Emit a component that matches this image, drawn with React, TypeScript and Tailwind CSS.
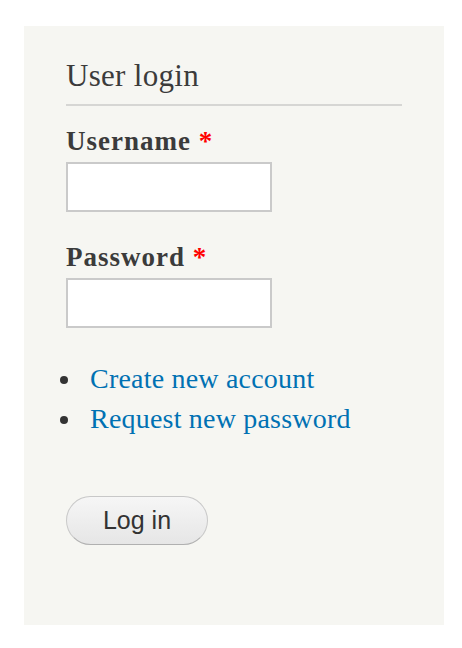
import React from "react";

const serif = { fontFamily: "Georgia, 'Liberation Serif', serif" };

export default function App() {
  return (
    <div className="min-h-[648px] w-[462px] bg-white pt-[26px] pl-[24px]">
      <div
        className="w-[420px] bg-[#f6f6f2] px-[42px] pt-[32px] pb-[80px] font-['Liberation_Serif',serif]"
        style={serif}
      >
        <h2 className="border-b-2 border-[#d6d6d4] pb-[10px] text-[31px] leading-[36px] font-normal tracking-[0.3px] text-[#3b3b3b]">
          User login
        </h2>
        <form onSubmit={(e) => e.preventDefault()}>
          <div className="mt-[19px]">
            <label className="block text-[27px] leading-[32px] font-bold tracking-[1px] text-[#3b3b3b]">
              Username <span className="text-[#ff0000]">*</span>
            </label>
            <input
              type="text"
              className="mt-[5px] block h-[50px] w-[206px] border-2 border-[#cacaca] bg-white outline-none"
            />
          </div>
          <div className="mt-[29px]">
            <label className="block text-[27px] leading-[32px] font-bold tracking-[1px] text-[#3b3b3b]">
              Password <span className="text-[#ff0000]">*</span>
            </label>
            <input
              type="password"
              className="mt-[5px] block h-[50px] w-[206px] border-2 border-[#cacaca] bg-white outline-none"
            />
          </div>
          <ul className="mt-[31px]">
            <li className="flex items-center text-[28px] leading-[40px] tracking-[0.2px]">
              <span className="-ml-[6px] mr-[22px] mt-[2px] h-[8px] w-[8px] shrink-0 rounded-full bg-[#333333]" />
              <a href="#" className="text-[#0071b3]">Create new account</a>
            </li>
            <li className="flex items-center text-[28px] leading-[40px] tracking-[0.2px]">
              <span className="-ml-[6px] mr-[22px] mt-[2px] h-[8px] w-[8px] shrink-0 rounded-full bg-[#333333]" />
              <a href="#" className="text-[#0071b3]">Request new password</a>
            </li>
          </ul>
          <button
            type="submit"
            className="mt-[57px] flex h-[49px] w-[142px] items-center justify-center rounded-full border border-[#c8c8c8] border-b-[#b0b0b0] bg-gradient-to-b from-[#f6f6f6] to-[#e6e6e6] font-['Liberation_Sans',Arial,sans-serif] text-[25px] text-[#333333]"
          >
            Log in
          </button>
        </form>
      </div>
    </div>
  );
}
